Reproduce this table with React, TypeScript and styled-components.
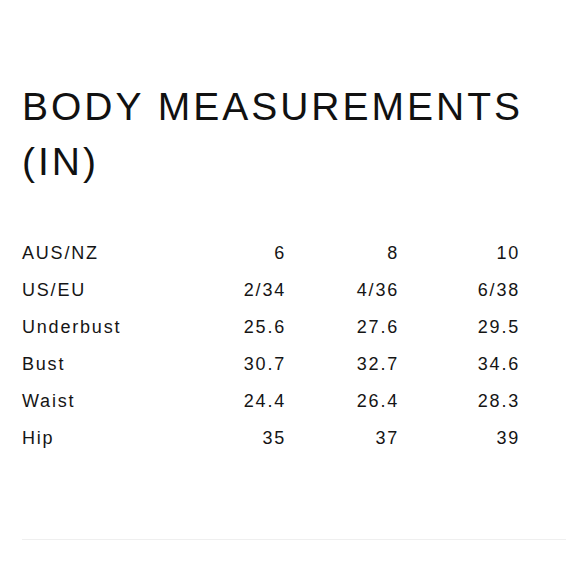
import styled, { createGlobalStyle } from 'styled-components';

const GlobalStyle = createGlobalStyle`
    html, body {
        margin: 0;
        padding: 0;
        background: #ffffff;
    }
    body {
        font-family: "Liberation Sans", Arial, Helvetica, sans-serif;
        color: #111111;
    }
`;

const Page = styled.div`
    width: 580px;
    height: 580px;
    box-sizing: border-box;
    padding: 79px 14px 0 22px;
    overflow: hidden;
`;

const Heading = styled.h2`
    margin: 0;
    font-size: 39px;
    line-height: 55px;
    font-weight: 400;
    letter-spacing: 3px;
    text-transform: uppercase;
    color: #111111;
`;

const Table = styled.div`
    margin-top: 46px;
    display: grid;
    grid-template-columns: 150px 114px 113px 121px;
    grid-auto-rows: 37px;
`;

const Cell = styled.div<{ $label?: boolean }>`
    font-size: 18px;
    line-height: 37px;
    letter-spacing: 1.8px;
    color: #151515;
    text-align: ${(p) => (p.$label ? 'left' : 'right')};
    white-space: nowrap;
`;

const Divider = styled.hr`
    margin: 82px 0 0;
    border: none;
    border-top: 1px solid #efefef;
    height: 0;
`;

const rows: [string, string, string, string][] = [
    ['AUS/NZ', '6', '8', '10'],
    ['US/EU', '2/34', '4/36', '6/38'],
    ['Underbust', '25.6', '27.6', '29.5'],
    ['Bust', '30.7', '32.7', '34.6'],
    ['Waist', '24.4', '26.4', '28.3'],
    ['Hip', '35', '37', '39'],
];

const App = () => {
    return (
        <>
            <GlobalStyle />
            <Page>
                <Heading>
                    Body Measurements
                    <br />
                    (In)
                </Heading>
                <Table>
                    {rows.map((row) =>
                        row.map((value, i) => (
                            <Cell key={row[0] + i} $label={i === 0}>
                                {value}
                            </Cell>
                        ))
                    )}
                </Table>
                <Divider />
            </Page>
        </>
    );
};

export default App;
